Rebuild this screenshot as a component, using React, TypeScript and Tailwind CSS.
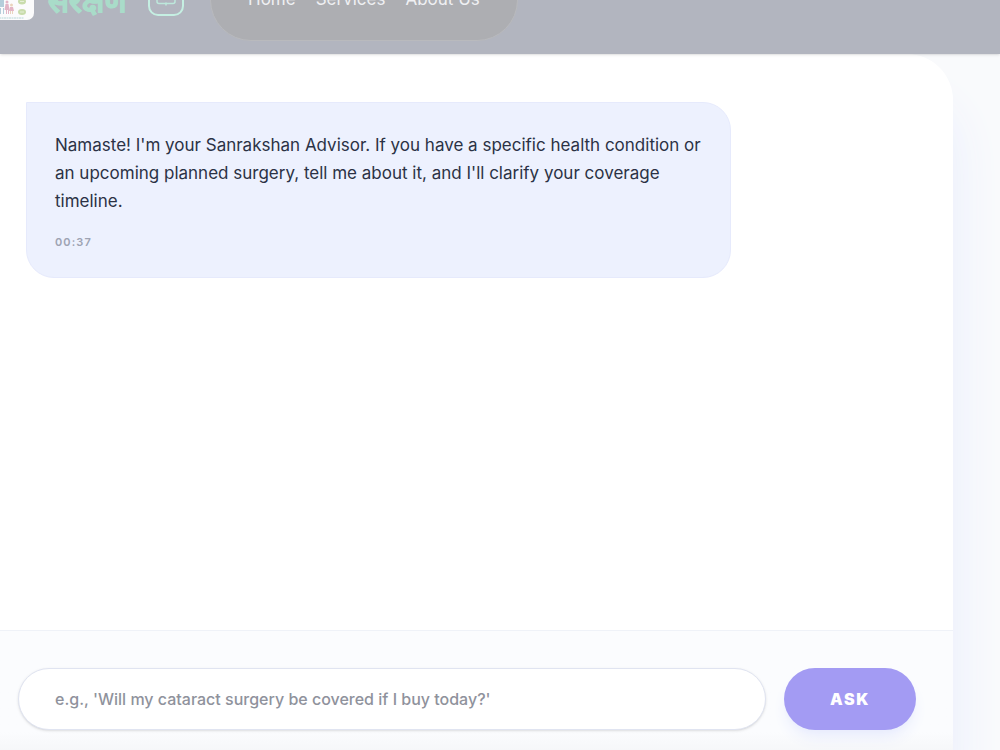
import React from "react";

const links = ["Home", "Services", "About Us"];

function Logo() {
  return (
    <svg viewBox="0 0 40 40" className="h-10 w-10 shrink-0" aria-hidden="true">
      <rect width="40" height="40" rx="7" fill="#fbfbfc" />
      <g fill="#b5cdda">
        <circle cx="8" cy="18" r="2" />
        <rect x="6" y="20" width="4" height="7" />
        <rect x="6" y="28" width="1" height="6" />
        <rect x="9" y="28" width="1" height="6" />
      </g>
      <g fill="#e3b5c6">
        <circle cx="13" cy="22" r="1.5" />
        <path d="M11.500 24h3l1 6h-5z" />
        <path d="M12 30h1v4h-1zM14 30h1v4h-1z" />
        <path d="M16 27h3l1 4h-5z" />
      </g>
      <g fill="#ead3bd">
        <circle cx="17.500" cy="25" r="1.5" />
        <path d="M16 31h1v3h-1zM18 31h1v3h-1z" />
      </g>
      <g fill="#c9dcac">
        <ellipse cx="28" cy="12" rx="4" ry="3" />
        <ellipse cx="28" cy="21.500" rx="4" ry="3" />
        <ellipse cx="28" cy="32" rx="4" ry="3" />
      </g>
      <path d="M26 21.500h4M26 32h4" stroke="#e5eed8" />
      <path d="M5 38h25" stroke="#cfe3e4" strokeWidth="1.5" strokeDasharray="2 0.5" />
    </svg>
  );
}

function BoxIcon() {
  return (
    <svg viewBox="0 0 20 12" className="h-3 w-5" fill="none" stroke="#bde8db" strokeWidth="1.5" aria-hidden="true">
      <path d="M1 1v6.500a2 2 0 0 0 2 2h14a2 2 0 0 0 2-2V1z" />
      <path d="M10 8.500v3" />
    </svg>
  );
}

function Header() {
  return (
    <header className="relative z-10 flex h-[54px] items-end overflow-hidden bg-[#b2b5bf] shadow-sm">
      <div className="flex h-[108px] shrink-0 items-center">
        <div className="-ml-1.5 flex items-center gap-3.5">
          <Logo />
          <span className="w-20 text-[31px] leading-none font-black whitespace-nowrap text-[#a9dcc9] [-webkit-text-stroke:1px_#a9dcc9]">
            संरक्षण
          </span>
        </div>
        <button
          type="button"
          aria-label="Menu"
          className="ml-5 flex h-8 w-9 items-center justify-center rounded-[10px] border-2 border-[#c5efe2]"
        >
          <BoxIcon />
        </button>
        <nav className="ml-[26px] flex h-[82px] items-center gap-5 rounded-full border border-[#b9babd] bg-[#adaeb2] px-[37px]">
          {links.map((link) => (
            <a key={link} href="#" className="text-[17px] text-[#eff0f3]">
              {link}
            </a>
          ))}
        </nav>
      </div>
    </header>
  );
}

export default function App() {
  return (
    <div className="flex min-h-screen flex-col bg-[#f9fafc] font-[Inter,sans-serif] text-[#2b3245]">
      <Header />
      <main className="mr-[47px] flex flex-1 flex-col overflow-clip rounded-tr-[46px] bg-white shadow-[0_50px_50px_#e8edfd]">
        <div className="flex-1 pt-12 pr-[46px] pl-[26px]">
          <div className="w-4/5 rounded-[28px] rounded-tl-none border border-[#e6eafc] bg-[#edf1fe] p-7">
            <p className="text-[17px] leading-7">
              Namaste! I'm your Sanrakshan Advisor. If you have a specific health condition or an upcoming planned
              surgery, tell me about it, and I'll clarify your coverage timeline.
            </p>
            <time className="mt-5 block text-[11px] leading-[14px] font-semibold tracking-widest text-[#9ea3b3]">
              00:37
            </time>
          </div>
        </div>

        <form
          onSubmit={(e) => e.preventDefault()}
          className="flex gap-[18px] border-t border-[#eff2f8] bg-linear-to-b from-[#fbfcfe] from-85% to-[#f6f7f9] pt-[37px] pr-[37px] pb-5 pl-[18px]"
        >
          <input
            type="text"
            aria-label="Your question"
            placeholder="e.g., 'Will my cataract surgery be covered if I buy today?'"
            className="h-[62px] min-w-0 flex-1 rounded-full border border-[#e0e4f1] bg-white px-9 text-base font-medium shadow-sm placeholder:text-[#8f929c]"
          />
          <button
            type="submit"
            className="h-[62px] w-[132px] rounded-full bg-[#a39bf3] text-base font-black tracking-widest text-white shadow-lg shadow-[#e8ecfd]"
          >
            ASK
          </button>
        </form>
      </main>
    </div>
  );
}
